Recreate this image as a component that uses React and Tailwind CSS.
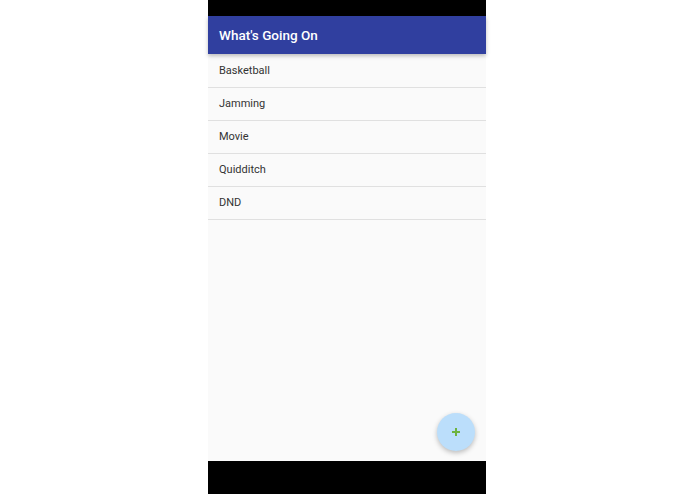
export default function App() {
  const items = ["Basketball", "Jamming", "Movie", "Quidditch", "DND"];
  return (
    <div className="w-[695px] h-[494px] bg-white flex pl-[208px]" style={{ fontFamily: "Roboto, 'Noto Sans', sans-serif" }}>
      <div className="w-[278px] h-[494px] flex flex-col">
        <div className="h-[16px] bg-black shrink-0" />
        <div className="h-[38px] bg-[#303f9f] flex items-center px-[11px] shadow-[0_2px_4px_rgba(0,0,0,0.25)] relative z-10 shrink-0">
          <span className="text-white text-[13.5px] font-medium">What's Going On</span>
        </div>
        <div className="flex-1 bg-[#fafafa] relative pt-[1px]">
          {items.map((t) => (
            <div key={t} className="h-[33px] border-b border-[#e0e0e0] flex items-center px-[11px] text-[11px] text-[#333333]">
              {t}
            </div>
          ))}
          <div className="absolute right-[11px] bottom-[10px] w-[38px] h-[38px] rounded-full bg-[#bbdefb] flex items-center justify-center shadow-[0_2px_5px_rgba(0,0,0,0.25)]">
            <svg width="10" height="10" viewBox="0 0 10 10">
              <path d="M5 1v8M1 5h8" stroke="#6db33f" strokeWidth="2" />
            </svg>
          </div>
        </div>
        <div className="h-[33px] bg-black shrink-0" />
      </div>
    </div>
  );
}
